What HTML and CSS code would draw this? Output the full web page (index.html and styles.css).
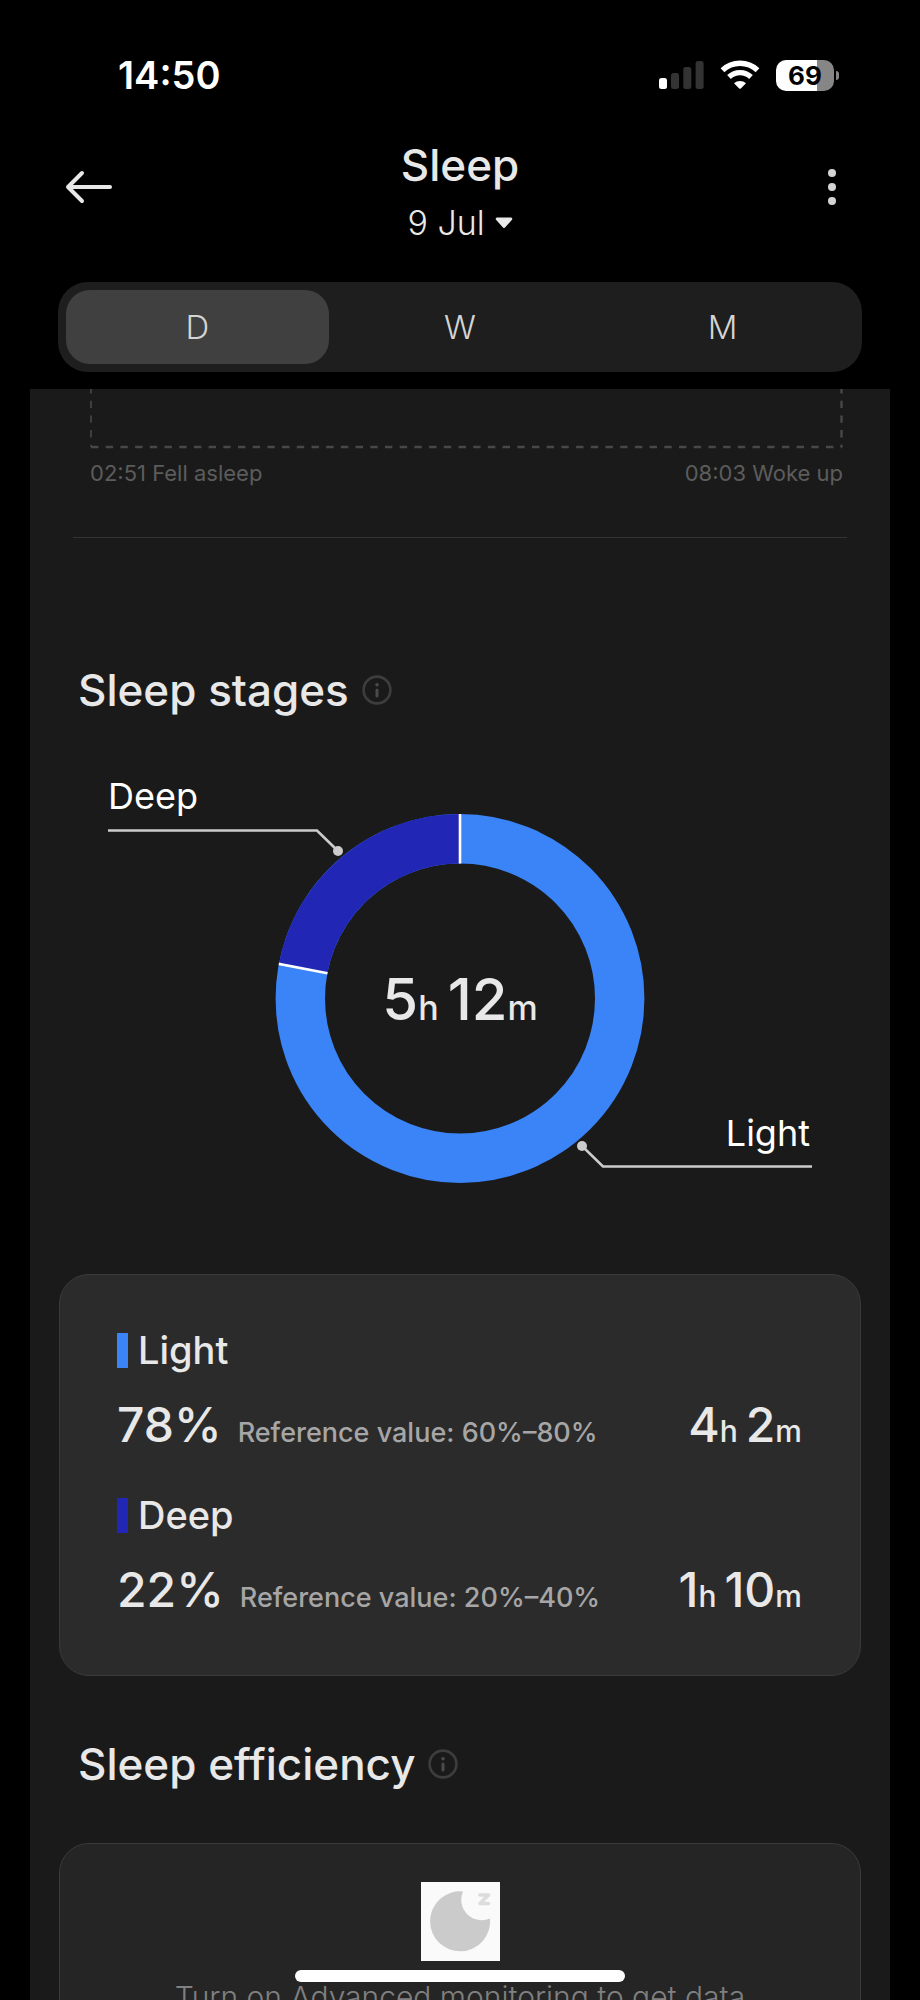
FILE: index.html
```html
<!DOCTYPE html>
<html lang="en">
<head>
  <meta charset="UTF-8">
  <meta name="viewport" content="width=device-width, initial-scale=1">
  <title>Sleep</title>
  <link rel="stylesheet" href="styles.css">
</head>
<body>

<!-- Phone status bar -->
<div class="status-bar">
  <span class="clock">14:50</span>
  <div class="status-icons">
    <svg class="signal" viewBox="0 0 45 28" width="45" height="28" aria-hidden="true">
      <rect x="0" y="17" width="8" height="11" rx="2.5" fill="#fff"/>
      <rect x="12" y="12" width="8" height="16" rx="2.5" fill="#333"/>
      <rect x="24.3" y="6" width="8" height="22" rx="2.5" fill="#333"/>
      <rect x="36.6" y="0" width="8" height="28" rx="2.5" fill="#333"/>
    </svg>
    <svg class="wifi" viewBox="0 0 40 30" width="40" height="30" aria-hidden="true">
      <g fill="none" stroke="#fff" stroke-width="5.4">
        <path d="M2.5 10.2 A25.5 25.5 0 0 1 37.5 10.2"/>
        <path d="M9 17 A16 16 0 0 1 31 17"/>
      </g>
      <path d="M14 23.2 A9 9 0 0 1 26 23.2 L20.8 28.5 Q20 29.2 19.2 28.5 Z" fill="#fff"/>
    </svg>
    <div class="battery">
      <span class="battery-level">69</span>
    </div>
  </div>
</div>

<!-- Title and navigation -->
<header class="header">
  <button class="icon-btn" aria-label="Back">
    <svg viewBox="0 0 48 34" width="48" height="34">
      <path d="M18 3 L4 17 L18 31 M4 17 H46" fill="none" stroke="#e8e8e8" stroke-width="4" stroke-linecap="round" stroke-linejoin="round"/>
    </svg>
  </button>
  <div class="heading">
    <h1>Sleep</h1>
    <button class="date-btn">9 Jul
      <svg viewBox="0 0 18 12" width="18" height="12" aria-hidden="true">
        <path d="M2 .5 H16 Q18 1 17 2.8 L10 10.5 Q9 11.6 8 10.5 L1 2.8 Q0 1 2 .5 Z" fill="#e8e8e8"/>
      </svg>
    </button>
  </div>
  <button class="icon-btn menu-btn" aria-label="More">
    <svg viewBox="0 0 8 36" width="8" height="36">
      <g fill="#d4d4d4">
        <circle cx="4" cy="4" r="4"/>
        <circle cx="4" cy="18" r="4"/>
        <circle cx="4" cy="32" r="4"/>
      </g>
    </svg>
  </button>
</header>

<!-- Day / week / month -->
<nav class="tabs">
  <button class="tab active">D</button>
  <button class="tab">W</button>
  <button class="tab">M</button>
</nav>

<main class="panel">
  <!-- Bottom edge of the sleep timeline -->
  <div class="timeline">
    <svg class="timeline-frame" viewBox="0 0 753 60" aria-hidden="true">
      <g fill="none" stroke="#484848" stroke-dasharray="7.4 7.3">
        <path d="M1 -3 V58" stroke-width="1.6"/>
        <path d="M1 58 H752" stroke-width="2.4"/>
        <path d="M751.5 -3 V58" stroke-width="2.4"/>
      </g>
    </svg>
    <div class="timeline-labels">
      <span>02:51 Fell asleep</span>
      <span>08:03 Woke up</span>
    </div>
  </div>

  <hr class="divider">

  <div class="section-title">
    <h2>Sleep stages</h2>
    <button class="info-btn" aria-label="About sleep stages">
      <svg viewBox="0 0 30 30" width="30" height="30">
        <circle cx="15" cy="15" r="13.4" fill="none" stroke="#3d3d3d" stroke-width="2.6"/>
        <circle cx="15" cy="9.8" r="1.8" fill="#4a4a4a"/>
        <path d="M15 15 V21" stroke="#4a4a4a" stroke-width="3" stroke-linecap="round"/>
      </svg>
    </button>
  </div>

  <!-- Donut chart, 22% deep and 78% light -->
  <svg class="donut" viewBox="0 0 800 554" role="img" aria-label="Deep 22%, Light 78%">
    <circle cx="400" cy="278.5" r="159.7" fill="none" stroke="#3a84f7" stroke-width="49.4"/>
    <path d="M243.1 248.6 A159.7 159.7 0 0 1 400 118.8" fill="none" stroke="#2226b4" stroke-width="49.4"/>
    <path d="M400 94 V143.5 M218.8 243.9 L267.5 253.2" stroke="#fff" stroke-width="2.6"/>
    <g fill="none" stroke="#ccc" stroke-width="2.6">
      <path d="M48 110.5 H257 L278 131"/>
      <path d="M752 446.5 H543 L522 426"/>
    </g>
    <circle cx="278" cy="131" r="5" fill="#ccc"/>
    <circle cx="522" cy="426" r="5" fill="#ccc"/>
    <text class="donut-label" x="48" y="89">Deep</text>
    <text class="donut-label" x="750" y="426" text-anchor="end">Light</text>
    <text class="donut-total" x="400" y="300" text-anchor="middle">5<tspan class="donut-unit">h </tspan>12<tspan class="donut-unit">m</tspan></text>
  </svg>

  <section class="card">
    <div class="stage">
      <div class="stage-name"><span class="marker light"></span>Light</div>
      <div class="stage-row">
        <span class="percent">78%</span>
        <span class="reference">Reference value: 60%–80%</span>
        <span class="duration">4<small>h </small>2<small>m</small></span>
      </div>
    </div>
    <div class="stage">
      <div class="stage-name"><span class="marker deep"></span>Deep</div>
      <div class="stage-row">
        <span class="percent">22%</span>
        <span class="reference">Reference value: 20%–40%</span>
        <span class="duration">1<small>h </small>10<small>m</small></span>
      </div>
    </div>
  </section>

  <div class="section-title efficiency-title">
    <h2>Sleep efficiency</h2>
    <button class="info-btn" aria-label="About sleep efficiency">
      <svg viewBox="0 0 30 30" width="30" height="30">
        <circle cx="15" cy="15" r="13.4" fill="none" stroke="#3d3d3d" stroke-width="2.6"/>
        <circle cx="15" cy="9.8" r="1.8" fill="#4a4a4a"/>
        <path d="M15 15 V21" stroke="#4a4a4a" stroke-width="3" stroke-linecap="round"/>
      </svg>
    </button>
  </div>

  <section class="card empty-card">
    <svg class="moon" viewBox="0 0 79 79" width="79" height="79" aria-hidden="true">
      <rect width="79" height="79" fill="#fafafa"/>
      <path d="M42 9.5 A30 30 0 1 0 69 36.5 A20.5 20.5 0 0 1 42 9.5 Z" fill="#cbcbcb"/>
      <path d="M59 13 H67.5 L59 21.5 H67.5" fill="none" stroke="#dcdcdc" stroke-width="3.6" stroke-linecap="round" stroke-linejoin="round"/>
    </svg>
    <p>Turn on Advanced monitoring to get data</p>
  </section>
</main>

<!-- Home indicator -->
<div class="home-bar"></div>

</body>
</html>
```
FILE: styles.css
```css
* {
  box-sizing: border-box;
}

body {
  margin: 0;
  height: 100vh;
  display: flex;
  flex-direction: column;
  overflow: hidden;
  background: #000;
  color: #e8e8e8;
  font-family: Inter, "Liberation Sans", sans-serif;
}

button {
  padding: 0;
  border: none;
  background: none;
  color: inherit;
  font-family: inherit;
  cursor: pointer;
}

svg {
  display: block;
}

h1, h2, p {
  margin: 0;
  font-weight: 500;
}

/* Status bar */
.status-bar {
  display: flex;
  justify-content: space-between;
  align-items: center;
  height: 118px;
  flex-shrink: 0;
  padding: 32px 81px 0 118px;
}

.clock {
  color: #fff;
  font-size: 38px;
  font-weight: 600;
}

.status-icons {
  display: flex;
  align-items: center;
  gap: 16px;
}

.battery {
  position: relative;
  width: 58px;
  height: 31px;
  margin-right: 5px;
  border-radius: 10px;
  background: linear-gradient(to right, #fff 70%, #868686 70%);
  text-align: center;
}

.battery::after {
  content: "";
  position: absolute;
  left: 60px;
  top: 11px;
  width: 3px;
  height: 9px;
  border-radius: 0 4px 4px 0;
  background: #868686;
}

.battery-level {
  color: #000;
  font-size: 26px;
  font-weight: 700;
  line-height: 31px;
}

/* Header */
.header {
  display: flex;
  justify-content: space-between;
  align-items: center;
  height: 138px;
  flex-shrink: 0;
  padding: 0 64px;
}

.icon-btn {
  width: 48px;
}

.menu-btn svg {
  margin: 0 auto;
}

.heading {
  padding-top: 14px;
  text-align: center;
}

.heading h1 {
  font-size: 44px;
  line-height: 58px;
}

.date-btn {
  display: flex;
  align-items: center;
  gap: 10px;
  margin: 0 auto;
  font-size: 34px;
  font-weight: 300;
  line-height: 58px;
}

/* Tabs */
.tabs {
  display: flex;
  height: 90px;
  flex-shrink: 0;
  margin: 26px 58px 17px;
  padding: 8px;
  border-radius: 30px;
  background: #1e1e1e;
}

.tab {
  flex: 1;
  border-radius: 24px;
  color: #d4d4d4;
  font-size: 33px;
  font-weight: 300;
}

.tab.active {
  background: #404040;
}

/* Scrolling content */
.panel {
  flex: 1;
  min-height: 0;
  margin: 0 30px;
  overflow-y: auto;
  scrollbar-width: none;
  background: #1a1a1a;
}

.timeline {
  margin: 0 47px 0 60px;
}

.timeline-frame {
  width: 100%;
}

.timeline-labels {
  display: flex;
  justify-content: space-between;
  margin-top: 10px;
  color: #5c5c5c;
  font-size: 22px;
  line-height: 28px;
}

.divider {
  height: 1px;
  margin: 50px 43px 0;
  border: none;
  background: #333;
}

.section-title {
  display: flex;
  align-items: center;
  gap: 13px;
  margin: 122px 48px 0;
}

.section-title h2 {
  font-size: 44px;
  line-height: 60px;
}

/* Donut chart */
.donut {
  width: calc(100% - 60px);
  margin: 0 30px;
}

.donut-label {
  fill: #fff;
  font-size: 36px;
}

.donut-total {
  fill: #e8e8e8;
  font-size: 58px;
  font-weight: 500;
}

.donut-unit {
  font-size: 34px;
}

/* Stage details */
.card {
  margin: 0 29px;
  padding: 50px 58px 55px 57px;
  border: 1px solid #3a3a3a;
  border-radius: 30px;
  background: #2b2b2b;
}

.stage + .stage {
  margin-top: 35px;
}

.stage-name {
  display: flex;
  align-items: center;
  gap: 10px;
  font-size: 38px;
  font-weight: 500;
  line-height: 50px;
}

.marker {
  width: 11px;
  height: 35px;
}

.marker.light {
  background: #3a84f7;
}

.marker.deep {
  background: #2226b4;
}

.stage-row {
  display: flex;
  align-items: baseline;
  gap: 16px;
  margin-top: 20px;
  font-size: 48px;
  font-weight: 500;
  line-height: 60px;
}

.reference {
  color: #a6a6a6;
  font-size: 27px;
  line-height: 30px;
}

.duration {
  margin-left: auto;
}

.duration small {
  font-size: 30px;
  line-height: 30px;
}

/* Sleep efficiency */
.efficiency-title {
  margin-top: 58px;
}

.empty-card {
  margin-top: 49px;
  padding: 38px 58px;
  background: #252525;
}

.moon {
  margin: 0 auto;
}

.empty-card p {
  margin-top: 16px;
  color: #808080;
  font-size: 30px;
  font-weight: 300;
  line-height: 40px;
  text-align: center;
}

.home-bar {
  position: fixed;
  left: 50%;
  bottom: 18px;
  width: 330px;
  height: 12px;
  margin-left: -165px;
  border-radius: 6px;
  background: #fff;
}
```
